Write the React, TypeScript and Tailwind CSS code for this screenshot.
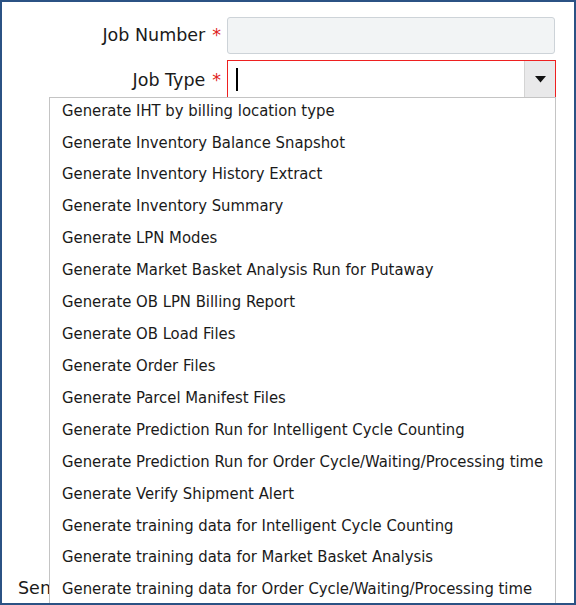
import React from "react";

const items = [
  "Generate IHT by billing location type",
  "Generate Inventory Balance Snapshot",
  "Generate Inventory History Extract",
  "Generate Inventory Summary",
  "Generate LPN Modes",
  "Generate Market Basket Analysis Run for Putaway",
  "Generate OB LPN Billing Report",
  "Generate OB Load Files",
  "Generate Order Files",
  "Generate Parcel Manifest Files",
  "Generate Prediction Run for Intelligent Cycle Counting",
  "Generate Prediction Run for Order Cycle/Waiting/Processing time",
  "Generate Verify Shipment Alert",
  "Generate training data for Intelligent Cycle Counting",
  "Generate training data for Market Basket Analysis",
  "Generate training data for Order Cycle/Waiting/Processing time",
];

const labelFont = { fontFamily: '"DejaVu Sans", sans-serif' };

export default function App() {
  return (
    <div
      className="relative w-[576px] h-[605px] overflow-hidden bg-white border-2 border-[#2b5284] text-[#1a1a1a]"
      style={{ fontFamily: '"DejaVu Sans Condensed", "DejaVu Sans", sans-serif' }}
    >
      <div className="flex flex-col pt-[15px]">
        <div className="flex items-center h-[37px]">
          <div className="w-[225px] flex justify-end items-center pr-[6px] text-[17.5px]" style={labelFont}>
            <span>Job Number</span>
            <span className="text-[#e02020] ml-[7px]">*</span>
          </div>
          <div className="w-[328px] h-[37px] rounded-[3px] border border-[#cdd3d8] bg-[#f2f4f5]" />
        </div>
        <div className="flex items-center h-[38px] mt-[6px]">
          <div className="w-[225px] flex justify-end items-center pr-[6px] text-[17.5px] pt-[2px]" style={labelFont}>
            <span>Job Type</span>
            <span className="text-[#e02020] ml-[7px]">*</span>
          </div>
          <div className="w-[329px] h-[38px] border border-[#ee2020] bg-white flex items-stretch">
            <div className="flex-1 flex items-center pl-[8px]">
              <div className="w-[2px] h-[23px] bg-black" />
            </div>
            <div className="w-[31px] bg-[#e9e9ea] border-l border-[#d4d4d4] flex items-center justify-center">
              <svg width="11" height="7" viewBox="0 0 11 7">
                <path d="M0 0 H11 L5.5 6.5 Z" fill="#111" />
              </svg>
            </div>
          </div>
        </div>
        <div className="mt-[477px] pl-[16px] text-[17.5px]" style={labelFont}>Send</div>
      </div>
      <div className="absolute left-[47px] top-[95px] w-[507px] h-[520px] bg-white border border-[#c4c4c4]">
        <div className="-mt-[3px]">
          {items.map((t) => (
            <div key={t} className="h-[31.93px] flex items-center pl-[12px] text-[16.5px] whitespace-nowrap">
              {t}
            </div>
          ))}
        </div>
      </div>
    </div>
  );
}
